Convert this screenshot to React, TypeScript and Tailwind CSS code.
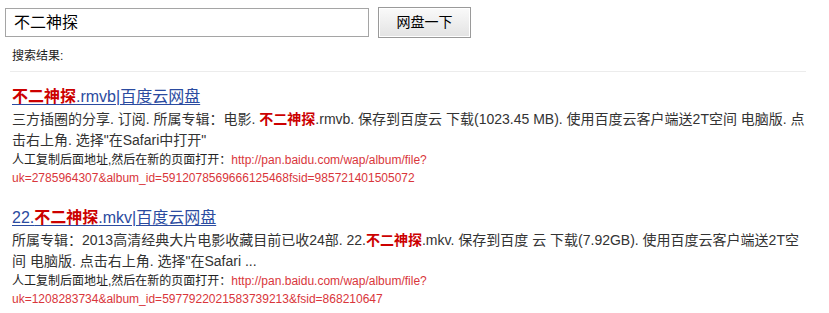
import React from "react";

const font = "font-['Liberation_Sans','Noto_Sans_CJK_SC',sans-serif]";

function Kw({ children }: { children: React.ReactNode }) {
  return <span className="font-bold text-[#c00]">{children}</span>;
}

type Result = {
  title: React.ReactNode;
  lines: React.ReactNode[];
  url: [string, string];
};

const results: Result[] = [
  {
    title: (
      <>
        <Kw>不二神探</Kw>.rmvb|百度云网盘
      </>
    ),
    lines: [
      <>
        三方插圈的分享. 订阅. 所属专辑：电影. <Kw>不二神探</Kw>.rmvb. 保存到百度云 下载(1023.45 MB). 使用百度云客户端送2T空间 电脑版. 点
      </>,
      <>击右上角. 选择"在Safari中打开"</>,
    ],
    url: ["http://pan.baidu.com/wap/album/file?", "uk=2785964307&album_id=5912078569666125468fsid=985721401505072"],
  },
  {
    title: (
      <>
        22.<Kw>不二神探</Kw>.mkv|百度云网盘
      </>
    ),
    lines: [
      <>
        所属专辑：2013高清经典大片电影收藏目前已收24部. 22.<Kw>不二神探</Kw>.mkv. 保存到百度 云 下载(7.92GB). 使用百度云客户端送2T空
      </>,
      <>间 电脑版. 点击右上角. 选择"在Safari ...</>,
    ],
    url: ["http://pan.baidu.com/wap/album/file?", "uk=1208283734&album_id=5977922021583739213&fsid=868210647"],
  },
];

export default function App() {
  return (
    <div className={`${font} h-[313px] w-[829px] overflow-hidden bg-white text-[#333]`}>
      <div className="flex items-center gap-[9px] pl-[5px] pt-[7px]">
        <div className="flex h-[29px] w-[364px] items-center border border-[#a5a5a5] bg-white px-[8px] text-[16px] text-black">
          不二神探
        </div>
        <button className="h-[31px] w-[93px] border border-[#9a9a9a] bg-gradient-to-b from-[#fafafa] to-[#e3e3e3] text-[14px] text-black shadow-[inset_0_0_0_1px_#fff]">
          网盘一下
        </button>
      </div>

      <div className="mx-[10px] mt-[9px] w-[796px] border-b border-[#ececec] pb-[6px] pl-[2px] text-[12px] leading-[18px] text-[#222]">
        搜索结果:
      </div>

      <div className="flex flex-col gap-[19px] px-[12px] pt-[13px]">
        {results.map((r, i) => (
          <div key={i}>
            <a className="text-[16px] leading-[22px] text-[#2b4ba0] underline decoration-1 underline-offset-2">
              {r.title}
            </a>
            <div className="text-[14px] leading-[21px] text-[#333]">
              {r.lines.map((l, j) => (
                <div key={j} className="whitespace-nowrap">
                  {l}
                </div>
              ))}
            </div>
            <div className="text-[12px] leading-[18px] text-[#222]">
              人工复制后面地址,然后在新的页面打开：<span className="text-[#d9363b]">{r.url[0]}</span>
              <div className="text-[#d9363b]">{r.url[1]}</div>
            </div>
          </div>
        ))}
      </div>
    </div>
  );
}
